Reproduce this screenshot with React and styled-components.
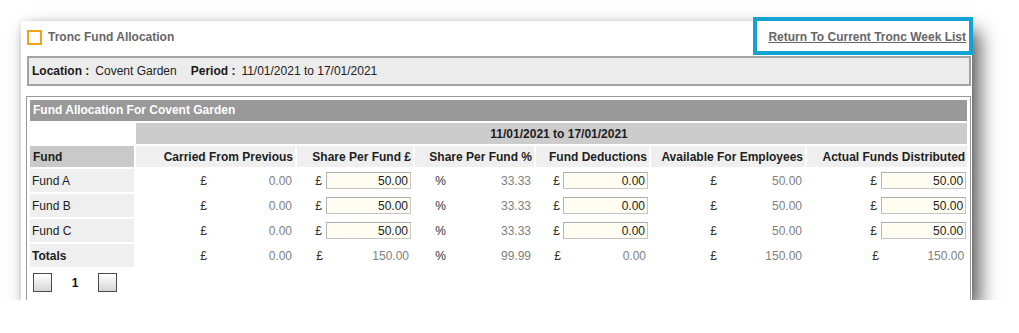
import React from 'react';
import styled, { createGlobalStyle } from 'styled-components';

const Global = createGlobalStyle`
  html, body { margin: 0; padding: 0; background: #ffffff; }
  body { font-family: "Liberation Sans", Arial, sans-serif; font-size: 12px; color: #222; }
`;

const Page = styled.div`
  padding: 21px 0 0 21px;
`;

const Stage = styled.div`
  position: relative;
  width: 951px;
`;

const Card = styled.div`
  width: 951px;
  height: 279px;
  box-sizing: border-box;
  overflow: hidden;
  background: #fff;
  padding: 0 1px 0 5px;
  box-shadow: 8px 10px 18px rgba(0, 0, 0, 0.62), 0 0 6px rgba(0, 0, 0, 0.12);
`;

const Highlight = styled.div`
  position: absolute;
  left: 732px;
  top: -4px;
  width: 220px;
  height: 38px;
  box-sizing: border-box;
  border: 4px solid #13a3d3;
  pointer-events: none;
`;

const TitleRow = styled.div`
  display: flex;
  align-items: center;
  justify-content: space-between;
  height: 16px;
  padding: 8px 5px 0 1px;
  margin-bottom: 11px;
`;

const TitleGroup = styled.div`
  display: flex;
  align-items: center;
  gap: 6px;
`;

const OrangeBox = styled.span`
  width: 15px;
  height: 15px;
  box-sizing: border-box;
  border: 2px solid #f5a01a;
  background: #fff;
`;

const Title = styled.span`
  font-weight: bold;
  color: #666;
`;

const ReturnLink = styled.a`
  font-weight: bold;
  color: #666;
  text-decoration: underline;
  cursor: pointer;
`;

const LocationBar = styled.div`
  display: flex;
  align-items: center;
  margin-left: 1px;
  height: 26px;
  padding-left: 3px;
  background: #ececec;
  border: 2px solid #a3a3a3;
`;

const Label = styled.span`
  font-weight: bold;
  color: #1a1a1a;
  margin-right: 6px;
`;

const Value = styled.span`
  color: #222;
  margin-right: ${p => p.$gap || 0}px;
`;

const Panel = styled.div`
  margin-top: 10px;
  border: 1px solid #999;
  padding: 1px 1px 20px;
`;

const PanelHeader = styled.div`
  margin: 2px 2px 0;
  height: 21px;
  line-height: 21px;
  background: #999999;
  color: #fff;
  font-weight: bold;
  padding-left: 3px;
`;

const Table = styled.table`
  width: 941px;
  border-collapse: separate;
  border-spacing: 2px;
  table-layout: fixed;
`;

const Row = styled.tr`
  height: ${p => p.$h}px;
`;

const Blank = styled.td`
  padding: 0;
`;

const DateCell = styled.td`
  padding: 0 0 0 15px;
  background: #cccccc;
  text-align: center;
  font-weight: bold;
  color: #1e1e1e;
`;

const HeadCell = styled.td`
  padding: 0 2px 0 ${p => (p.$left ? 3 : 0)}px;
  background: ${p => (p.$dark ? '#c9c9c9' : '#efefef')};
  text-align: ${p => (p.$left ? 'left' : 'right')};
  font-weight: bold;
  color: #1e1e1e;
  white-space: nowrap;
`;

const NameCell = styled.td`
  padding: 0 0 0 2px;
  background: #efefef;
  color: #1e1e1e;
  font-weight: ${p => (p.$bold ? 'bold' : 'normal')};
`;

const Sym = styled.td`
  padding: 0 ${p => p.$pr}px 0 0;
  text-align: right;
  color: #333;
`;

const Num = styled.td`
  padding: 0 ${p => p.$pr}px 0 0;
  text-align: right;
  color: #808080;
`;

const InputCell = styled.td`
  padding: 0;
`;

const AmountInput = styled.input`
  display: block;
  box-sizing: border-box;
  width: 85px;
  height: 17px;
  margin: 0 ${p => p.$mr}px 0 auto;
  padding: 0 2px;
  border: 1px solid #c6c6c6;
  border-top-color: #adadad;
  border-left-color: #b5b5b5;
  background: #fffdf2;
  text-align: right;
  font-family: "Liberation Sans", Arial, sans-serif;
  font-size: 12px;
  color: #222;
  outline: none;
`;

const Pager = styled.div`
  display: flex;
  align-items: center;
  margin-top: 4px;
  padding-left: 5px;
`;

const PageBtn = styled.span`
  width: 19px;
  height: 19px;
  box-sizing: border-box;
  border: 1px solid #4a4a4a;
  background: linear-gradient(#ffffff, #d6d6d6);
`;

const PageNum = styled.span`
  width: 46px;
  text-align: center;
  font-weight: bold;
  color: #111;
`;

const widths = [104, 73, 84, 26, 88, 33, 84, 25, 86, 68, 84, 72, 86];

const funds = [
  { name: 'Fund A', carried: '0.00', share: '50.00', pct: '33.33', ded: '0.00', avail: '50.00', actual: '50.00' },
  { name: 'Fund B', carried: '0.00', share: '50.00', pct: '33.33', ded: '0.00', avail: '50.00', actual: '50.00' },
  { name: 'Fund C', carried: '0.00', share: '50.00', pct: '33.33', ded: '0.00', avail: '50.00', actual: '50.00' },
];

const totals = { carried: '0.00', share: '150.00', pct: '99.99', ded: '0.00', avail: '150.00', actual: '150.00' };

const headers = [
  'Carried From Previous',
  'Share Per Fund £',
  'Share Per Fund %',
  'Fund Deductions',
  'Available For Employees',
  'Actual Funds Distributed',
];

export default function App() {
  return (
    <>
      <Global />
      <Page>
        <Stage>
          <Card>
            <TitleRow>
              <TitleGroup>
                <OrangeBox />
                <Title>Tronc Fund Allocation</Title>
              </TitleGroup>
              <ReturnLink>Return To Current Tronc Week List</ReturnLink>
            </TitleRow>
            <LocationBar>
              <Label>Location :</Label>
              <Value $gap={14}>Covent Garden</Value>
              <Label>Period :</Label>
              <Value>11/01/2021 to 17/01/2021</Value>
            </LocationBar>
            <Panel>
              <PanelHeader>Fund Allocation For Covent Garden</PanelHeader>
              <Table>
                <colgroup>
                  {widths.map((w, i) => (
                    <col key={i} style={{ width: w }} />
                  ))}
                </colgroup>
                <tbody>
                  <Row $h={21}>
                    <Blank />
                    <DateCell colSpan={12}>11/01/2021 to 17/01/2021</DateCell>
                  </Row>
                  <Row $h={21}>
                    <HeadCell $left $dark>Fund</HeadCell>
                    {headers.map(h => (
                      <HeadCell key={h} colSpan={2}>{h}</HeadCell>
                    ))}
                  </Row>
                  {funds.map(f => (
                    <Row $h={23} key={f.name}>
                      <NameCell>{f.name}</NameCell>
                      <Sym $pr={2}>£</Sym>
                      <Num $pr={3}>{f.carried}</Num>
                      <Sym $pr={1}>£</Sym>
                      <InputCell><AmountInput $mr={2} readOnly value={f.share} /></InputCell>
                      <Sym $pr={2}>%</Sym>
                      <Num $pr={3}>{f.pct}</Num>
                      <Sym $pr={1}>£</Sym>
                      <InputCell><AmountInput $mr={1} readOnly value={f.ded} /></InputCell>
                      <Sym $pr={2}>£</Sym>
                      <Num $pr={3}>{f.avail}</Num>
                      <Sym $pr={2}>£</Sym>
                      <InputCell><AmountInput $mr={1} readOnly value={f.actual} /></InputCell>
                    </Row>
                  ))}
                  <Row $h={23}>
                    <NameCell $bold>Totals</NameCell>
                    <Sym $pr={2}>£</Sym>
                    <Num $pr={3}>{totals.carried}</Num>
                    <Sym $pr={0}>£</Sym>
                    <Num $pr={4}>{totals.share}</Num>
                    <Sym $pr={2}>%</Sym>
                    <Num $pr={3}>{totals.pct}</Num>
                    <Sym $pr={0}>£</Sym>
                    <Num $pr={3}>{totals.ded}</Num>
                    <Sym $pr={2}>£</Sym>
                    <Num $pr={3}>{totals.avail}</Num>
                    <Sym $pr={0}>£</Sym>
                    <Num $pr={3}>{totals.actual}</Num>
                  </Row>
                </tbody>
              </Table>
              <Pager>
                <PageBtn />
                <PageNum>1</PageNum>
                <PageBtn />
              </Pager>
            </Panel>
          </Card>
          <Highlight />
        </Stage>
      </Page>
    </>
  );
}
